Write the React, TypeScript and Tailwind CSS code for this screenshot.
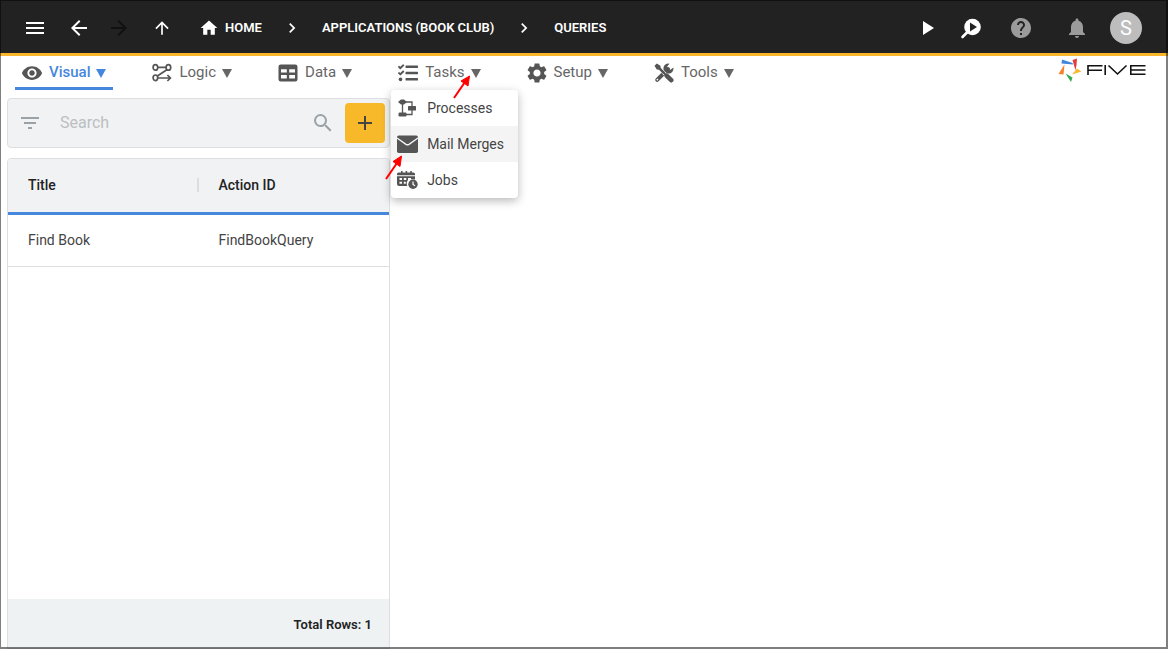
import type { ReactNode } from 'react';
import {
  MdAdd,
  MdArrowBack,
  MdArrowForward,
  MdArrowUpward,
  MdChevronRight,
  MdFilterList,
  MdHelp,
  MdHome,
  MdMenu,
  MdNotifications,
  MdPlayArrow,
  MdSearch,
  MdSettings,
  MdVisibility,
} from 'react-icons/md';
import { FaTasks } from 'react-icons/fa';

type QueryRow = {
  title: string;
  actionId: string;
};

const rows: QueryRow[] = [{ title: 'Find Book', actionId: 'FindBookQuery' }];

function LogicIcon() {
  return (
    <svg className="size-5" viewBox="0 0 20 20" fill="none" stroke="currentColor" strokeWidth="1.7">
      <ellipse cx="3.4" cy="4.4" rx="2.3" ry="2.8" />
      <ellipse cx="16.4" cy="4.4" rx="2.3" ry="2.8" />
      <ellipse cx="3.4" cy="14.8" rx="2.3" ry="2.8" />
      <path d="M5.700 4.400h8.400M14.800 6.800L5.400 13M5.700 15h12.300M15.400 12l3 3-3 3" />
    </svg>
  );
}

function DataIcon() {
  return (
    <svg className="size-5" viewBox="0 0 20 20" fill="currentColor" fillRule="evenodd">
      <path d="M2.800 1.500h14.400a2.300 2.300 0 0 1 2.300 2.300v12.400a2.300 2.300 0 0 1-2.300 2.300H2.800a2.300 2.300 0 0 1-2.300-2.300V3.800a2.300 2.300 0 0 1 2.300-2.300zM3 6.200v3.200h5.800V6.200zM11.200 6.200v3.200H17V6.200zM3 12v3.600h5.800V12zM11.200 12v3.600H17V12z" />
    </svg>
  );
}

function ToolsIcon() {
  return (
    <svg className="size-5" viewBox="0 0 20 20">
      <path d="M3.200 16.800L14 6" stroke="currentColor" strokeWidth="4" strokeLinecap="round" />
      <path
        d="M19.300 4.600A5 5 0 1 1 15.400.7L13.200 3.500l.6 2.700 2.700.6z"
        fill="currentColor"
      />
      <circle cx="3.400" cy="16.600" r=".9" fill="white" />
      <path d="M4 4L16 16" stroke="white" strokeWidth="3.600" />
      <path d="M.5 2.800L2.800.5l3.600 2.300.4 2.200L11 9.200 9.200 11 5 6.800l-2.200-.4z" fill="currentColor" />
      <path d="M12.600 12.600L17.200 17.200" stroke="currentColor" strokeWidth="4.600" strokeLinecap="round" />
      <path d="M9 9l3 3" stroke="currentColor" strokeWidth="2" />
    </svg>
  );
}

function ProcessesIcon() {
  return (
    <svg className="size-5" viewBox="0 0 20 20" fill="currentColor">
      <path d="M1 4l3-2.600h3L10 4 7 6.400H4z" />
      <rect x="1.500" y="14.500" width="8" height="4" rx="1.200" />
      <rect x="11" y="8" width="8" height="4.500" rx=".5" />
      <path d="M5.500 5v10M9 4h6v4M9 16.500h6V12" fill="none" stroke="currentColor" strokeWidth="1.300" />
    </svg>
  );
}

function MailIcon() {
  return (
    <svg className="h-5 w-[21px]" viewBox="0 0 21 20">
      <rect x="0" y="1.500" width="21" height="17.500" rx="1.800" fill="currentColor" />
      <path d="M0 4l9 6.300q1.500 1 3 0l9-6.300" fill="none" stroke="#f4f4f4" strokeWidth="1.400" />
    </svg>
  );
}

function JobsIcon() {
  return (
    <svg className="h-5 w-[21px]" viewBox="0 0 21 20" fill="currentColor">
      <path d="M1.500 2.500H4V1h1.600v1.500h3V1h1.600v1.500h3V1h1.600v1.500h1.700q1.500 0 1.500 1.500v1.300H0V4q0-1.500 1.500-1.500z" />
      <path
        fillRule="evenodd"
        d="M0 6.300h18v3h-2.800L14 9V8h-3v2l-1.200 2v2.200l.5 1.800H2q-2 0-2-2zM2.500 8v2H5V8zM6.800 8v2h2.500V8zM2.500 11.700v2H5v-2zM6.800 11.700v2h2v-2z"
      />
      <circle cx="16" cy="14.300" r="4.700" />
      <path d="M16 11.500v3l2 1.300" fill="none" stroke="white" strokeWidth="1.200" />
    </svg>
  );
}

function FindRunIcon() {
  return (
    <svg className="size-6" viewBox="0 0 24 24" fill="white">
      <circle cx="13.500" cy="11" r="8.300" />
      <path d="M8.500 16L3.500 21" stroke="white" strokeWidth="2.600" strokeLinecap="round" />
      <path d="M11 6.500v9l7-4.500z" fill="#222" />
    </svg>
  );
}

function FiveLogo() {
  return (
    <svg className="mt-0.5 h-6 w-[88px]" viewBox="0 0 88 24" role="img" aria-label="Five">
      <path d="M4 1.500L14.500 5 15 6.500 3.500 5.500z" fill="#3f86dc" />
      <path d="M14.500 2L19 .5 18.500 7 17.500 12.500z" fill="#e23c3c" />
      <path d="M23.500 13.500L19 10.500 14 16.500z" fill="#f9b934" />
      <path d="M7.500 15.500L14.500 19.500 13 24z" fill="#34a853" />
      <path d="M6.500 6.500L5.500 16.500.5 16z" fill="#f5802a" />
      <g fill="none" stroke="#111" strokeWidth="1.600">
        <path d="M44.500 7.800H30v9.200M30 12.300h14M47.200 7v10M50.500 7.500l9 8.500 9-8.500M87.500 7.800H72.800v8.400h14.700M72.800 12h14.700" />
      </g>
    </svg>
  );
}

function Caret() {
  return (
    <svg className="h-[9px] w-2.5" viewBox="0 0 10 9" fill="currentColor">
      <path d="M0 0h10L5 9z" />
    </svg>
  );
}

type TabProps = {
  icon: ReactNode;
  label: string;
  active?: boolean;
  children?: ReactNode;
};

function Tab({ icon, label, active, children }: TabProps) {
  return (
    <li className="relative">
      <button
        type="button"
        className={
          active
            ? 'flex h-[34px] items-center border-b-3 border-[#4587dc] px-[7px] pt-[3px] font-medium text-[#4587dc]'
            : 'flex h-[34px] items-center border-b-3 border-transparent px-[7px] pt-[3px] text-[#666]'
        }
      >
        <span className="mr-[7px] text-[#555]">{icon}</span>
        <span className="mr-1.5">{label}</span>
        <Caret />
      </button>
      {children}
    </li>
  );
}

function MenuItem({ icon, label, selected }: { icon: ReactNode; label: string; selected?: boolean }) {
  return (
    <button
      type="button"
      role="menuitem"
      className={
        selected
          ? 'flex h-9 w-full items-center bg-[#f4f4f4] pr-3.5 pl-1.5 text-[#444]'
          : 'flex h-9 w-full items-center pr-3.5 pl-1.5 text-[#444]'
      }
    >
      <span className="mr-2 flex w-[22px] text-[#555]">{icon}</span>
      {label}
    </button>
  );
}

function TopBar() {
  return (
    <header className="flex h-14 shrink-0 items-center border-b-3 border-[#f9b52b] bg-[#222] pt-[3px] pr-[26px] pl-[23px] text-white">
      <div className="flex items-center">
        <button type="button" aria-label="Menu" className="mr-5"><MdMenu className="size-6" /></button>
        <button type="button" aria-label="Back" className="mr-4"><MdArrowBack className="size-6" /></button>
        <button type="button" aria-label="Forward" className="mr-[21px]" disabled>
          <MdArrowForward className="size-6 text-[#111]" />
        </button>
        <button type="button" aria-label="Up"><MdArrowUpward className="size-5" /></button>
      </div>
      <nav aria-label="Breadcrumb" className="ml-[27px] flex items-center text-[13px] font-semibold">
        <a href="#home" className="flex items-center gap-1.5"><MdHome className="size-5" />HOME</a>
        <MdChevronRight className="mx-5 size-5" />
        <a href="#applications">APPLICATIONS (BOOK CLUB)</a>
        <MdChevronRight className="mx-5 size-5" />
        <a href="#queries">QUERIES</a>
      </nav>
      <div className="ml-auto flex items-center">
        <button type="button" aria-label="Run" className="mr-5"><MdPlayArrow className="size-6" /></button>
        <button type="button" aria-label="Inspect" className="mr-[26px]"><FindRunIcon /></button>
        <button type="button" aria-label="Help" className="mr-8"><MdHelp className="size-6 text-[#9b9b9b]" /></button>
        <button type="button" aria-label="Notifications" className="mr-[21px]">
          <MdNotifications className="size-6 text-[#9b9b9b]" />
        </button>
        <button type="button" aria-label="Account" className="size-8 rounded-full bg-[#bdbdbd] text-xl">S</button>
      </div>
    </header>
  );
}

export default function App() {
  return (
    <div className="relative flex h-screen flex-col bg-white font-['Roboto',sans-serif] text-sm text-[#444]">
      <TopBar />

      <div className="flex shrink-0 items-start justify-between pr-[22px] pl-[15px]">
        <ul className="flex gap-8 text-[15px]">
          <Tab active icon={<MdVisibility className="size-[22px] -mx-px" />} label="Visual" />
          <Tab icon={<LogicIcon />} label="Logic" />
          <Tab icon={<DataIcon />} label="Data" />
          <Tab icon={<FaTasks className="size-5" />} label="Tasks">
            <div
              role="menu"
              className="absolute top-full left-0 z-10 rounded-sm bg-white text-sm whitespace-nowrap shadow-[0_3px_10px_rgba(0,0,0,0.28)]"
            >
              <MenuItem icon={<ProcessesIcon />} label="Processes" />
              <MenuItem selected icon={<MailIcon />} label="Mail Merges" />
              <MenuItem icon={<JobsIcon />} label="Jobs" />
            </div>
          </Tab>
          <Tab icon={<MdSettings className="size-6 -mx-0.5" />} label="Setup" />
          <Tab icon={<ToolsIcon />} label="Tools" />
        </ul>
        <FiveLogo />
      </div>

      <main className="ml-[7px] flex w-1/3 min-w-[383px] grow flex-col pt-2 lg:max-w-[383px]">
        <div className="flex h-[50px] shrink-0 items-center rounded border border-[#dedfe0] bg-[#f1f2f4] pr-1 pl-2.5">
          <button type="button" aria-label="Filter"><MdFilterList className="size-6 text-[#9aa1a7]" /></button>
          <input
            type="text"
            aria-label="Search"
            placeholder="Search"
            className="ml-[18px] min-w-0 grow bg-transparent text-base outline-none placeholder:text-[#bcbfc2]"
          />
          <button type="button" aria-label="Find" className="mr-2.5"><MdSearch className="size-6 text-[#9aa1a7]" /></button>
          <button
            type="button"
            aria-label="Add"
            className="flex size-10 items-center justify-center rounded bg-[#f7b82a] text-[#444]"
          >
            <MdAdd className="size-6" />
          </button>
        </div>

        <section className="mt-2.5 flex grow flex-col overflow-hidden rounded-t border border-[#dedfe0]">
          <table className="w-full table-fixed border-collapse text-left">
            <thead>
              <tr className="h-[54px] border-b-3 border-[#4587dc] bg-[#f1f2f4] text-[#222]">
                <th className="px-5 font-medium">
                  <div className="-mr-5 flex items-center justify-between">
                    Title
                    <span className="h-3.5 w-0.5 bg-[#dcdddf]" />
                  </div>
                </th>
                <th className="px-5 font-medium">Action ID</th>
              </tr>
            </thead>
            <tbody>
              {rows.map((row) => (
                <tr key={row.actionId} className="h-[53px] border-b border-[#e0e0e0]">
                  <td className="px-5">{row.title}</td>
                  <td className="px-5">{row.actionId}</td>
                </tr>
              ))}
            </tbody>
          </table>
          <footer className="mt-auto flex h-[49px] items-center justify-end bg-[#eef2f3] px-[17px] text-[13px] font-semibold text-[#222]">
            <span className="pt-1">Total Rows: {rows.length}</span>
          </footer>
        </section>
      </main>

      {/* pointers to the Tasks tab and the Mail Merges item */}
      <svg className="pointer-events-none absolute top-[74px] left-[384px] z-20 h-[108px] w-[90px]" viewBox="0 0 90 108">
        <g stroke="#f00" strokeWidth="2" fill="#f00">
          <path d="M70 24L81 8" />
          <path d="M85.500 2L77 7 84 12z" strokeWidth="1" />
          <path d="M2 105L13 89" />
          <path d="M17.500 82L9 87.500 16 92.500z" strokeWidth="1" />
        </g>
      </svg>

      <div className="pointer-events-none absolute inset-0 z-30 border-t border-r-2 border-b-2 border-l border-black/50" />
    </div>
  );
}
